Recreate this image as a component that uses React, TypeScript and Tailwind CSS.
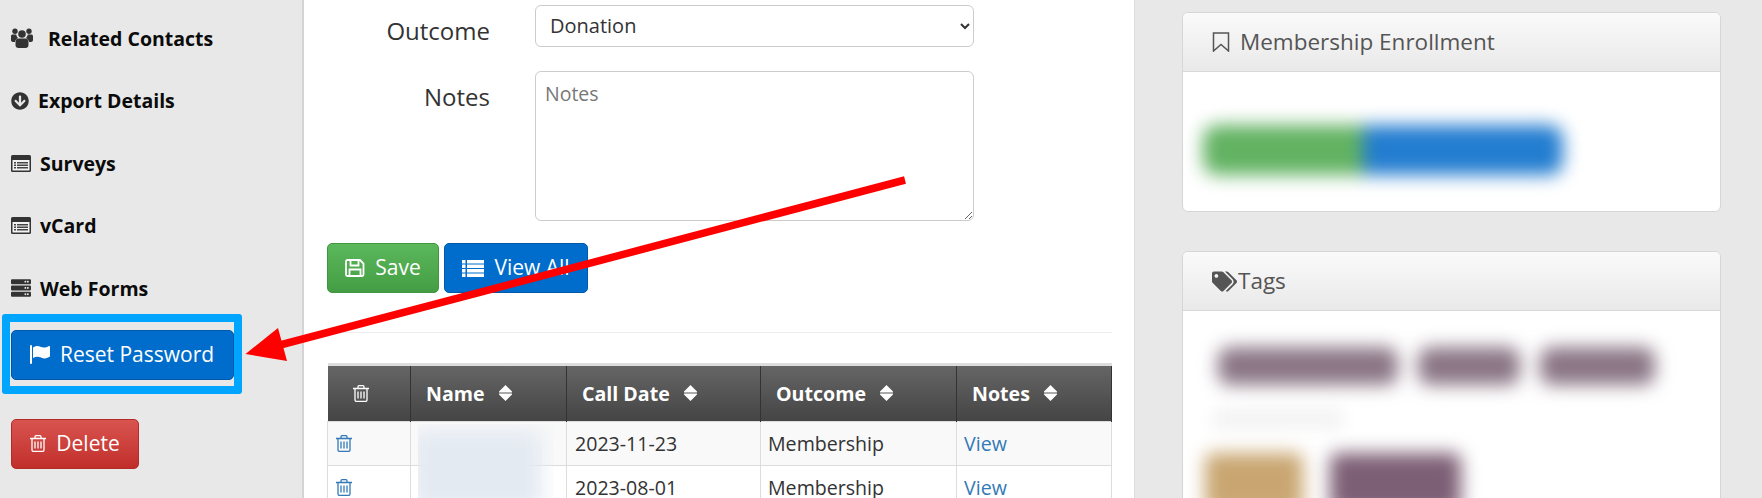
import { FaArrowCircleDown, FaServer, FaTags } from "react-icons/fa";

function UsersIcon() {
  return (
    <svg width="22" height="20" viewBox="0 0 22 20" fill="currentColor">
      <circle cx="4" cy="3.2" r="2.7" />
      <circle cx="18" cy="3.2" r="2.7" />
      <circle cx="11" cy="6" r="3.8" />
      <path d="M0 8.500c0-1.500.8-2 1.600-2h3.600c.2 1.600 1 2.800 2 3.600-1.600.6-2.800 1.800-3.200 3.900H2c-1.200 0-2-.7-2-2zM22 8.500c0-1.500-.8-2-1.600-2h-3.600c-.2 1.600-1 2.800-2 3.600 1.600.6 2.800 1.800 3.200 3.900H20c1.200 0 2-.7 2-2z" />
      <path d="M7.500 10.500h7c2 0 3 1.600 3 4v2.500c0 1.800-1.200 3-3 3h-7c-1.800 0-3-1.200-3-3v-2.500c0-2.400 1-4 3-4z" />
    </svg>
  );
}

function ListAltIcon() {
  return (
    <svg width="20" height="17" viewBox="0 0 20 17">
      <rect width="20" height="17" rx="1.500" fill="#333" />
      <rect x="1.500" y="5" width="17" height="10.500" fill="#f2f2f2" />
      <path d="M3 7h2v1.500H3zM3 9.500h2V11H3zM3 12h2v1.500H3zM6 7h11v1.500H6zM6 9.500h11V11H6zM6 12h11v1.500H6z" fill="#444" />
    </svg>
  );
}

function FlagIcon() {
  return (
    <svg width="21" height="19" viewBox="0 0 21 19" fill="currentColor">
      <rect x="0" y="0" width="2" height="19" rx="1" />
      <path d="M3 2.500c2.500-2 5-2 7.500-.8 2.500 1.200 5 1.200 8.500-.7.8-.3 1 .1 1 .6v10c-3 2.100-6 2.300-9 .9-2.800-1.300-5.500-1.100-8 .5z" />
    </svg>
  );
}

function SaveIcon() {
  return (
    <svg width="20" height="18" viewBox="0 0 20 18" fill="none" stroke="currentColor" strokeWidth="1.800">
      <path d="M2.500 1h12.500l3.500 3.500v11c0 .8-.6 1.500-1.500 1.500h-14.500c-.8 0-1.500-.7-1.500-1.500v-13c0-.9.600-1.500 1.500-1.500z" />
      <path d="M5.500 1v5.500h8V1M4.500 17v-6.500h11V17" />
    </svg>
  );
}

function ListIcon() {
  return (
    <svg width="22" height="17" viewBox="0 0 22 17" fill="currentColor">
      <path d="M0 0h3.500v3.500H0zM5 0h17v3.500H5zM0 4.500h3.500V8H0zM5 4.500h17V8H5zM0 9h3.500v3.500H0zM5 9h17v3.500H5zM0 13.500h3.500V17H0zM5 13.500h17V17H5z" />
    </svg>
  );
}

function TrashIcon({ className }: { className?: string }) {
  return (
    <svg width="16" height="17" viewBox="0 0 16 17" fill="none" stroke="currentColor" strokeWidth="1.300" className={className}>
      <path d="M0 3.500h16M5 3.500V1.800c0-.6.400-1.100 1-1.100h4c.6 0 1 .5 1 1.100v1.700" />
      <path d="M2 3.500v11.500c0 .9.600 1.400 1.300 1.400h9.400c.7 0 1.300-.5 1.300-1.400V3.500" />
      <path d="M5 6.500v7M8 6.500v7M11 6.500v7" />
    </svg>
  );
}

function SortIcon() {
  return (
    <svg width="13" height="16" viewBox="0 0 13 16" fill="currentColor">
      <path d="M6.500 0 13 6.500c.2.500 0 .9-.5.900H.5c-.5 0-.7-.4-.5-.9zM6.500 16 13 9.500c.2-.5 0-.9-.5-.9H.5c-.5 0-.7.4-.5.900z" />
    </svg>
  );
}

function BookmarkIcon() {
  return (
    <svg width="18" height="20" viewBox="0 0 18 20" fill="none" stroke="currentColor" strokeWidth="1.500" className="mr-[10px]">
      <path d="M1.500 1h15v18L9 12.500 1.500 19z" />
    </svg>
  );
}

const SIDE_LINKS = [
  { label: "Related Contacts", icon: <UsersIcon />, gap: "gap-[15px]" },
  { label: "Export Details", icon: <FaArrowCircleDown size={18} />, gap: "gap-[9px]" },
  { label: "Surveys", icon: <ListAltIcon />, gap: "gap-[9px]" },
  { label: "vCard", icon: <ListAltIcon />, gap: "gap-[9px]" },
  { label: "Web Forms", icon: <FaServer size={20} />, gap: "gap-[9px]" },
];

const ROWS = [
  { date: "2023-11-23", outcome: "Membership", striped: true },
  { date: "2023-08-01", outcome: "Membership", striped: false },
];

function SortHead({ label, className }: { label: string; className: string }) {
  return (
    <th className={`border-x border-[#333] pl-[15px] text-left font-bold ${className}`}>
      <span className="flex items-center gap-[14px]">
        {label}
        <SortIcon />
      </span>
    </th>
  );
}

function Card({ title, icon, children, className }: { title: string; icon: React.ReactNode; children: React.ReactNode; className: string }) {
  return (
    <section className={`overflow-hidden rounded-[6px] border border-[#d6d6d6] bg-white ${className}`}>
      <h3 className="flex h-[59px] items-center border-b border-[#d8d8d8] bg-gradient-to-b from-[#fafafa] to-[#e9e9e9] pl-[29px] text-[22.5px] font-normal text-[#555]">
        {icon}
        {title}
      </h3>
      {children}
    </section>
  );
}

export default function App() {
  return (
    <div className="relative flex h-[498px] w-[1762px] overflow-hidden bg-[#e8e8e8] font-['Open_Sans',sans-serif]">
      {/* Sidebar */}
      <aside className="w-[304px] shrink-0 border-r-2 border-[#d4d4d4] pt-[7px]">
        <ul className="pl-[11px] text-[19.5px] font-bold text-[#0b0b0b]">
          {SIDE_LINKS.map((link) => (
            <li key={link.label} className={`flex h-[62.5px] items-center ${link.gap}`}>
              <span className="text-[#333]">{link.icon}</span>
              {link.label}
            </li>
          ))}
        </ul>
        <div className="ml-[2px] mt-[-6px] w-[240px] rounded-[3px] border-[8px] border-[#00a5ff] px-[0.5px] py-[8px] pb-[6px]">
          <button className="flex h-[50px] w-[223px] items-center justify-center gap-[9px] rounded-[5px] border border-[#0059a8] bg-[#006dcc] text-[21px] text-white">
            <FlagIcon />
            Reset Password
          </button>
        </div>
        <button className="ml-[11px] mt-[25px] flex h-[50px] w-[128px] items-center justify-center gap-[10px] rounded-[5px] border border-[#b52b27] bg-gradient-to-b from-[#d9534f] to-[#c12e2a] text-[21px] text-white">
          <TrashIcon />
          Delete
        </button>
      </aside>

      {/* Main column */}
      <main className="w-[831px] shrink-0 border-r border-[#dcdcdc] bg-white pl-[23px] pr-[22px] pt-[5px]">
        <form className="text-[#333]">
          <div className="flex items-start">
            <label className="w-[163px] pt-[11px] text-right text-[24px] leading-[30px]">Outcome</label>
            <select
              defaultValue="Donation"
              className="ml-[45px] h-[42px] w-[439px] rounded-[6px] border border-[#ccc] bg-white pb-[2px] pl-[10px] pr-[6px] text-[20px] text-[#333]"
            >
              <option>Donation</option>
              <option>Membership</option>
            </select>
          </div>
          <div className="mt-[24px] flex items-start">
            <label className="w-[163px] pt-[11px] text-right text-[24px] leading-[30px]">Notes</label>
            <textarea
              placeholder="Notes"
              className="ml-[45px] h-[150px] w-[439px] rounded-[6px] border border-[#ccc] px-[9px] py-[7px] text-[19.5px] placeholder:text-[#777]"
            />
          </div>
          <div className="mt-[22px] flex gap-[5px]">
            <button type="button" className="flex h-[50px] w-[112px] items-center justify-center gap-[10px] rounded-[5px] border border-[#419641] bg-gradient-to-b from-[#5cb85c] to-[#449d44] text-[21px] text-white">
              <SaveIcon />
              Save
            </button>
            <button type="button" className="flex h-[50px] w-[144px] items-center justify-center gap-[10px] rounded-[5px] border border-[#0059a8] bg-[#006dcc] text-[21px] text-white">
              <ListIcon />
              View All
            </button>
          </div>
        </form>

        <hr className="mt-[39px] border-t border-[#eeeeee]" />

        <table className="relative mt-[30px] w-[784px] table-fixed border-collapse border-t-[3px] border-[#ddd] text-[19.6px] text-[#333]">
          <thead>
            <tr className="h-[57px] bg-gradient-to-b from-[#666] to-[#444] text-[19.6px] text-white">
              <th className="w-[83px] border-r border-[#333] pr-[16px]">
                <TrashIcon className="mx-auto" />
              </th>
              <SortHead label="Name" className="w-[156px]" />
              <SortHead label="Call Date" className="w-[194px]" />
              <SortHead label="Outcome" className="w-[196px]" />
              <SortHead label="Notes" className="w-[155px]" />
            </tr>
          </thead>
          <tbody>
            {ROWS.map((row) => (
              <tr key={row.date} className={`h-[44px] ${row.striped ? "bg-[#f9f9f9]" : "bg-white"}`}>
                <td className="border border-[#ddd] pl-[8px] text-[#337ab7]">
                  <TrashIcon />
                </td>
                <td className="border border-[#ddd]" />
                <td className="border border-[#ddd] pl-[8px]">{row.date}</td>
                <td className="border border-[#ddd] pl-[7px]">{row.outcome}</td>
                <td className="border border-[#ddd] pl-[7px] text-[#337ab7]">View</td>
              </tr>
            ))}
          </tbody>
        </table>
      </main>

      {/* Right column */}
      <div className="flex-1 pl-[47px] pt-[12px]">
        <Card title="Membership Enrollment" icon={<BookmarkIcon />} className="h-[200px] w-[539px]">
          <div className="ml-[20px] mt-[53px] flex h-[50px] w-[360px] blur-[9px]">
            <div className="w-[160px] rounded-l-[14px] bg-[#62b262]" />
            <div className="flex-1 rounded-r-[14px] bg-[#237dd0]" />
          </div>
        </Card>
        <Card title="Tags" icon={<FaTags size={25} className="mr-[1px]" />} className="mt-[39px] h-[260px] w-[539px]">
          <div className="ml-[35px] mt-[36px] flex gap-[20px] blur-[9px]">
            <div className="h-[38px] w-[180px] rounded-[12px] bg-[#8a7585]" />
            <div className="h-[38px] w-[102px] rounded-[12px] bg-[#8a7585]" />
            <div className="h-[38px] w-[115px] rounded-[12px] bg-[#8a7585]" />
          </div>
          <div className="ml-[30px] mt-[24px] h-[20px] w-[130px] bg-[#f3f3f3] blur-[8px]" />
          <div className="ml-[22px] mt-[24px] flex gap-[27px] blur-[9px]">
            <div className="h-[60px] w-[98px] rounded-[8px] bg-[#c9a671]" />
            <div className="h-[60px] w-[131px] rounded-[8px] bg-[#7d5f75]" />
          </div>
        </Card>
      </div>

      {/* Blurred contact names */}
      <div className="absolute left-[418px] top-[424px] h-[74px] w-[136px] overflow-hidden">
        <div className="ml-[-6px] mt-[6px] h-[80px] w-[130px] bg-[#e4eaf2] blur-[10px]" />
      </div>

      {/* Annotation arrow */}
      <svg className="pointer-events-none absolute left-0 top-0" width="1762" height="498" viewBox="0 0 1762 498">
        <line x1="905" y1="180" x2="280" y2="345" stroke="#ff0000" strokeWidth="7.5" />
        <polygon points="245.5,354 278,328 287,361" fill="#ff0000" />
      </svg>
    </div>
  );
}
